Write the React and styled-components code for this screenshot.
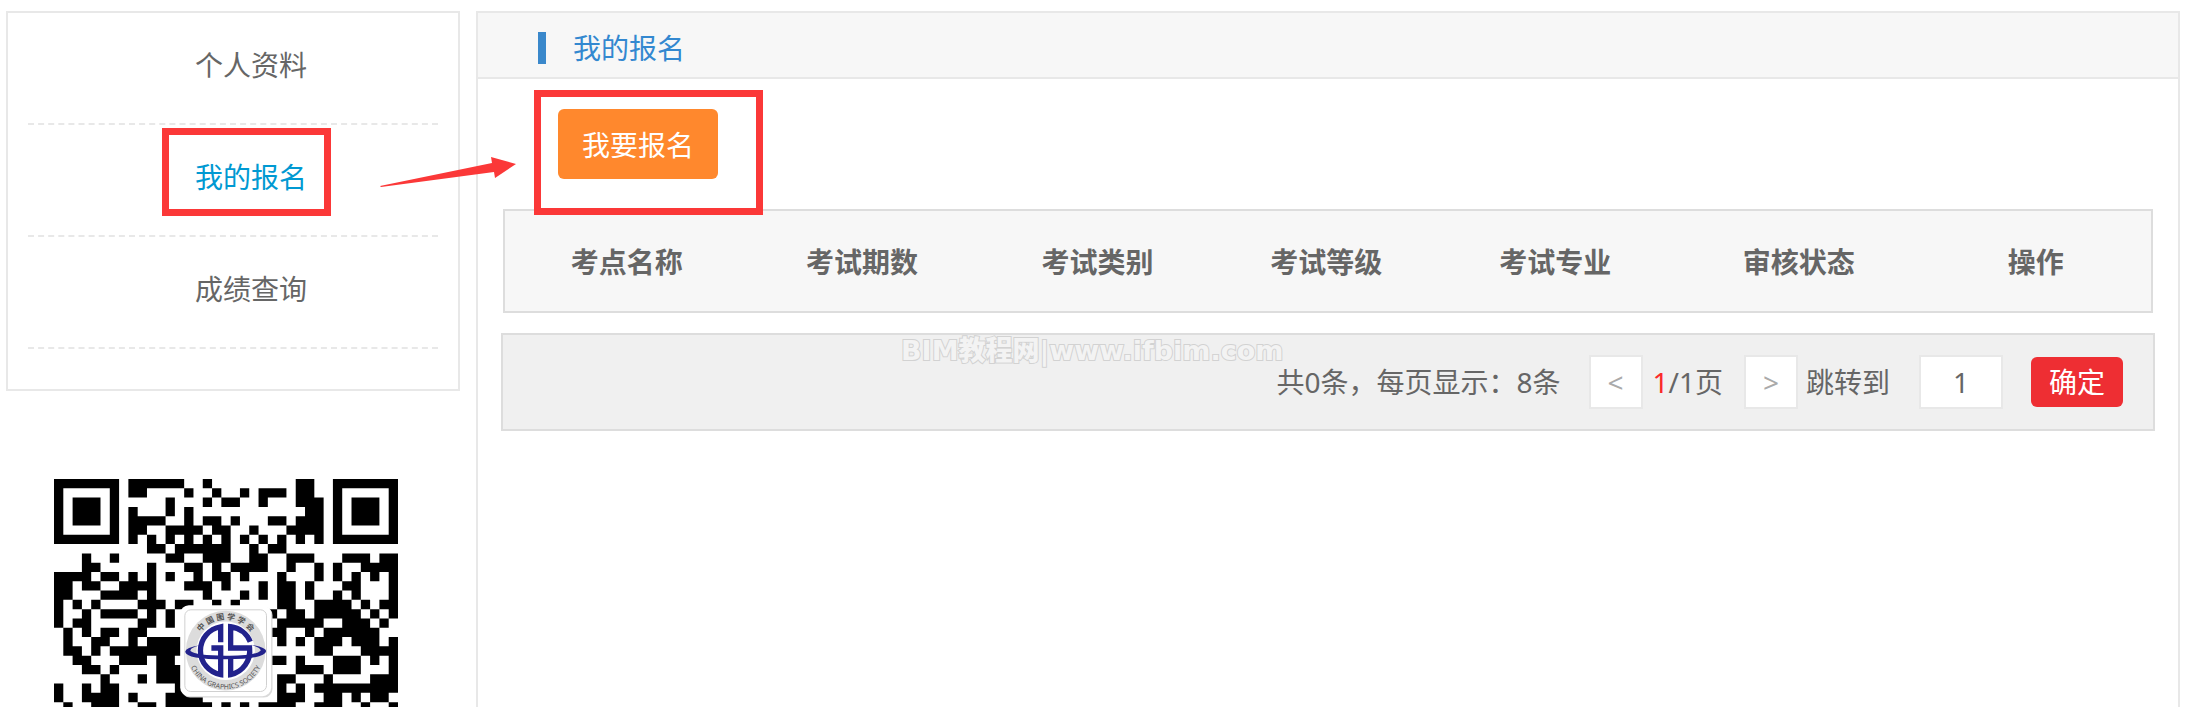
import React from "react";
import styled, { createGlobalStyle } from "styled-components";

const GlobalStyle = createGlobalStyle`
  * { box-sizing: border-box; }
  body {
    margin: 0;
    background: #fff;
    color: #666;
    font-family: "Noto Sans", "Noto Sans CJK SC", sans-serif;
    font-size: 28px;
    line-height: 40px;
  }
  button, input { font: inherit; }
`;

const Page = styled.div`
  position: relative;
  display: flex;
  gap: 16px;
  height: 100vh;
  padding: 11px 9px 0 6px;
  overflow: hidden;
`;

const Sidebar = styled.aside`
  flex: 0 0 454px;
`;

const Menu = styled.ul`
  list-style: none;
  margin: 0;
  padding: 0 20px 40px;
  border: 2px solid #e8e8e8;
`;

const MenuItem = styled.li`
  position: relative;
  height: 112px;
  padding-left: 36px;
  border-bottom: 2px dashed #e8e8e8;
  text-align: center;
`;

const MenuLink = styled.a`
  color: ${(p) => (p.$active ? "#0099d2" : "#666")};
  line-height: 104px;
  text-decoration: none;
`;

const Callout = styled.span`
  position: absolute;
  z-index: 2;
  left: ${(p) => p.$left}px;
  top: ${(p) => p.$top}px;
  width: ${(p) => p.$width}px;
  height: ${(p) => p.$height}px;
  border: 7px solid #fb3838;
  pointer-events: none;
`;

const Arrow = styled.svg`
  position: absolute;
  z-index: 2;
  left: 352px;
  top: 32px;
  pointer-events: none;
`;

const QrCode = styled.svg`
  display: block;
  width: 344px;
  margin: 88px 0 0 48px;
`;

const Panel = styled.main`
  flex: 1;
  min-width: 0;
  border: 2px solid #e8e8e8;
  border-bottom: 0;
`;

const PanelHeader = styled.header`
  display: flex;
  align-items: center;
  height: 66px;
  padding: 6px 60px 0;
  background: #f7f7f7;
  border-bottom: 2px solid #e8e8e8;
`;

const PanelTitle = styled.h1`
  margin: 0;
  padding: 0 0 0 27px;
  border-left: 8px solid #3a88cb;
  color: #3388d0;
  font-size: 28px;
  font-weight: 400;
  line-height: 32px;
`;

const PanelBody = styled.div`
  padding: 0 23px;
`;

const Actions = styled.div`
  position: relative;
  padding: 30px 57px;
`;

const ApplyButton = styled.button`
  display: block;
  width: 160px;
  height: 70px;
  padding: 2px 0 0;
  border: 0;
  border-radius: 6px;
  background: #ff882d;
  color: #fff;
`;

const TableFrame = styled.div`
  margin: 0 2px 20px;
  border: 2px solid #ddd;
  background: #f7f7f7;
`;

const Table = styled.table`
  width: 100%;
  table-layout: fixed;
  border-collapse: collapse;
`;

const HeadCell = styled.th`
  width: ${(p) => p.$width}px;
  height: 100px;
  padding: 2px 0 0;
  font-weight: 700;
`;

const Pager = styled.nav`
  position: relative;
  display: flex;
  align-items: center;
  justify-content: flex-end;
  height: 98px;
  padding: 0 30px;
  border: 2px solid #ddd;
  background: #f0f0f0;
  white-space: nowrap;
`;

const Watermark = styled.span`
  position: absolute;
  left: 398px;
  top: 0;
  color: #f3f3f3;
  font-family: "DejaVu Sans", "Noto Sans CJK SC", sans-serif;
  font-size: 27px;
  font-weight: 900;
  line-height: 32px;
  -webkit-text-stroke: 2px #d2d2d2;
  paint-order: stroke fill;
`;

const PageStep = styled.button`
  width: 54px;
  height: 54px;
  padding: 0;
  border: 2px solid #e8e8e8;
  background: #fff;
  color: #aaa;
  font-size: 28px;
`;

const PageCount = styled.span`
  margin: 0 21px 0 10px;
`;

const Total = styled.span`
  margin-right: 28px;
`;

const Current = styled.span`
  color: #fb2a2a;
`;

const JumpLabel = styled.label`
  display: flex;
  align-items: center;
  gap: 29px;
  margin: 0 28px 0 8px;
`;

const JumpInput = styled.input`
  width: 84px;
  height: 54px;
  padding: 0;
  border: 2px solid #e8e8e8;
  background: #fff;
  color: #666;
  text-align: center;
`;

const Confirm = styled.button`
  width: 92px;
  height: 50px;
  padding: 0;
  border: 0;
  border-radius: 6px;
  background: #ee2e33;
  color: #fff;
`;

const MENU = ["个人资料", "我的报名", "成绩查询"];

const COLUMNS = [
  ["考点名称", 150],
  ["考试期数", 140],
  ["考试类别", 150],
  ["考试等级", 132],
  ["考试专业", 150],
  ["审核状态", 150],
  ["操作", 142],
];

// Dark modules of each row, as inclusive column ranges.
const QR_ROWS = [
  "0-6 8-13 16 26-27 30-36",
  "0 6 8-9 14 17 20 22-24 26-27 30 36",
  "0 2-4 6 12 16 18-19 22 26-28 30 32-34 36",
  "0 2-4 6 8 12 14 27-28 30 32-34 36",
  "0 2-4 6 8-11 14 16-17 19 23-24 26-28 30 32-34 36",
  "0 6 8-9 12-15 17-18 21 25-28 30 36",
  "0-6 8 10 12 14 16 18 20 22 24 26 28 30-36",
  "10-11 13-18 21 23-24",
  "3 6 12-13 16-18 21-22 25-27 31-33 35-36",
  "3-4 10 14-15 17 19-22 25 28 30 33-36",
  "0-3 5-6 8 10 12 15 17-18 20 24 28 30 32 34 36",
  "0-1 3-4 7-10 14-16 18 22 24-25 27 31-32 36",
  "0-1 5-8 10 16 20 22 24-25 27 30 32 36",
  "0 2 4 9-11 13-14 17 19 24-25 28-31 33 35-36",
  "0 3 5-8 10 12 23 25-26 28-32 34 36",
  "0 2-3 9-10 12 24-28 31-33 35",
  "1 3 5-6 8-9 23-24 27 29-34",
  "1 4-5 8 10-13 24 26 28-30 32-34 36",
  "1-2 4 6-13 28-29 33-36",
  "2-3 7-9 11-12 23-24 26 30-32 34 36",
  "3-4 6 11-13 26-28 30-32 36",
  "5 9 11-13 24-25 29 34-36",
  "0 3 5-6 13-14 24 26 28-36",
  "0 3-6 8 12-15 24-26 29-30 32 34-35",
  "1 4-6 9-10 12-16 18 20 22-25 28-30 33 36",
];

const MODULE = 28;

const qrPath = QR_ROWS.map((row, y) =>
  row
    .split(" ")
    .map((range) => {
      const [from, to = from] = range.split("-").map(Number);
      return `M${from * MODULE} ${y * MODULE}H${(to + 1) * MODULE}v${MODULE}H${from * MODULE}z`;
    })
    .join("")
).join("");

function SocietyLogo() {
  return (
    <g>
      <rect x="384" y="384" width="274" height="274" rx="26" fill="#d9d9d9" />
      <rect x="380" y="380" width="274" height="274" rx="26" fill="#fff" />
      <rect x="394" y="394" width="246" height="246" rx="18" fill="#fff" stroke="#d0d0d0" strokeWidth="3" />
      <circle cx="517" cy="517" r="120" fill="#dcdcdc" />
      <circle cx="517" cy="517" r="88" fill="#fff" />
      <g fill="none" stroke="#22228c" strokeWidth="16">
        <path d="M502 492V445A73 73 0 0 0 502 589V509H474" />
        <path d="M591 490A73 73 0 0 0 532 445V509H589A73 73 0 0 1 532 589V540" />
      </g>
      <path
        d="M440 501Q396 508 395 520Q398 543 517 543Q636 543 639 518Q638 507 594 499Q625 509 622 517Q606 533 517 532Q426 532 411 518Q408 509 440 501Z"
        fill="#22228c"
      />
      <path id="logo-top" d="M423 517A94 94 0 0 1 611 517" fill="none" />
      <path id="logo-bottom" d="M401 517A116 116 0 0 0 633 517" fill="none" />
      <g fill="#555" fontSize="24">
        <text textAnchor="middle" fontWeight="700">
          <textPath href="#logo-top" startOffset="50%">中 国 图 学 学 会</textPath>
        </text>
        <text textAnchor="middle" fontSize="21">
          <textPath href="#logo-bottom" startOffset="50%">CHINA GRAPHICS SOCIETY</textPath>
        </text>
      </g>
    </g>
  );
}

export default function App() {
  return (
    <>
      <GlobalStyle />
      <Page>
        <Sidebar>
          <Menu>
            {MENU.map((label) => {
              const active = label === "我的报名";
              return (
                <MenuItem key={label}>
                  <MenuLink href="#" $active={active}>{label}</MenuLink>
                  {active && (
                    <>
                      <Callout $left={134} $top={3} $width={169} $height={88} />
                      <Arrow width="136" height="30" viewBox="0 0 136 30" aria-hidden="true">
                        <path d="M0 29L112 6L111 0L136 7L115 21L114 15L1 30Z" fill="#fb3838" />
                      </Arrow>
                    </>
                  )}
                </MenuItem>
              );
            })}
          </Menu>
          <QrCode viewBox="0 0 1036 700" role="img" aria-label="二维码">
            <path d={qrPath} fill="#000" />
            <SocietyLogo />
          </QrCode>
        </Sidebar>
        <Panel>
          <PanelHeader>
            <PanelTitle>我的报名</PanelTitle>
          </PanelHeader>
          <PanelBody>
            <Actions>
              <ApplyButton type="button">我要报名</ApplyButton>
              <Callout $left={33} $top={11} $width={229} $height={125} />
            </Actions>
            <TableFrame>
              <Table>
                <thead>
                  <tr>
                    {COLUMNS.map(([name, width]) => (
                      <HeadCell key={name} scope="col" $width={width}>{name}</HeadCell>
                    ))}
                  </tr>
                </thead>
              </Table>
            </TableFrame>
            <Pager>
              <Watermark>BIM教程网|www.ifbim.com</Watermark>
              <Total>共0条，每页显示：8条</Total>
              <PageStep type="button" aria-label="上一页">&lt;</PageStep>
              <PageCount><Current>1</Current>/1页</PageCount>
              <PageStep type="button" aria-label="下一页">&gt;</PageStep>
              <JumpLabel>
                跳转到
                <JumpInput type="text" defaultValue="1" />
              </JumpLabel>
              <Confirm type="button">确定</Confirm>
            </Pager>
          </PanelBody>
        </Panel>
      </Page>
    </>
  );
}
